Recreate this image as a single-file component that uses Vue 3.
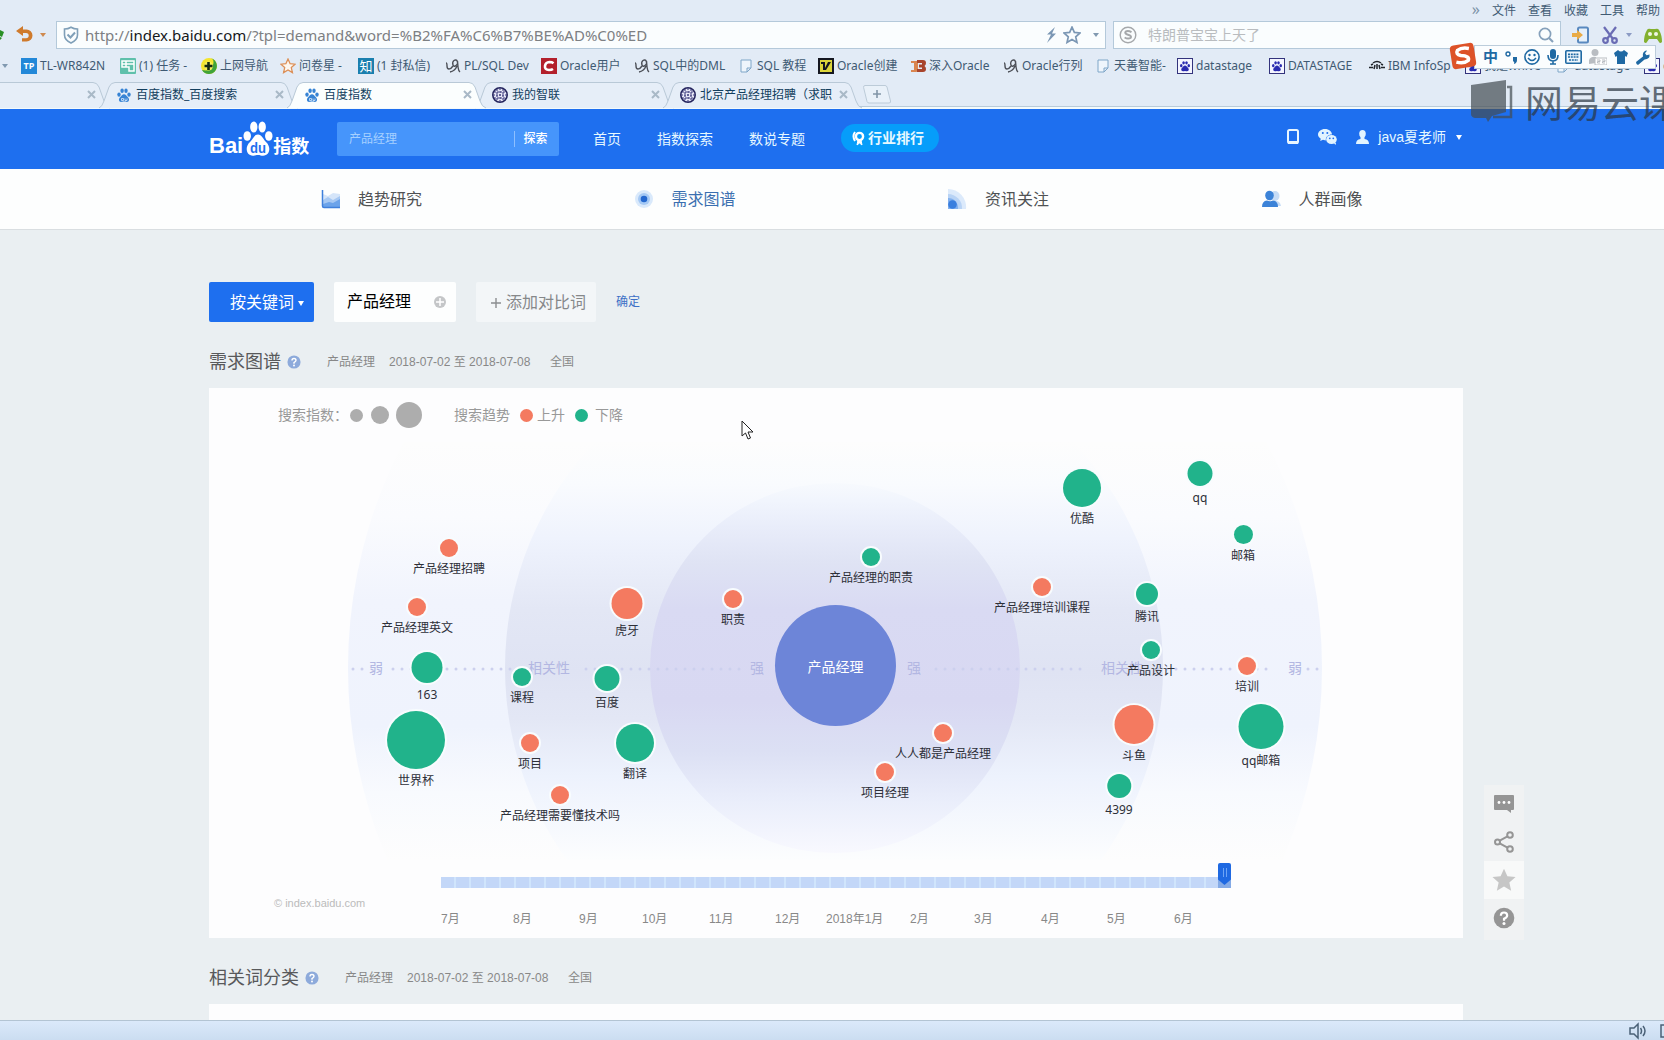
<script setup>
import { ref } from 'vue'

const menus = ['文件', '查看', '收藏', '工具', '帮助']

const bookmarks = [
  { badge: 'TP', text: 'TL-WR842N', w: 99 },
  { icon: 'task', text: '(1) 任务 -', w: 81 },
  { icon: 'nav', text: '上网导航', w: 79 },
  { icon: 'wjx', text: '问卷星 -', w: 78 },
  { badge: '知', text: '(1 封私信)', w: 87 },
  { icon: 'pl', text: 'PL/SQL Dev', w: 96 },
  { icon: 'csdn', text: 'Oracle用户', w: 93 },
  { icon: 'pl', text: 'SQL中的DML', w: 104 },
  { icon: 'page', text: 'SQL 教程', w: 80 },
  { icon: 'v', text: 'Oracle创建', w: 92 },
  { icon: 'jb', text: '深入Oracle', w: 93 },
  { icon: 'pl', text: 'Oracle行列', w: 92 },
  { icon: 'page', text: '天善智能-', w: 82 },
  { icon: 'paw', text: 'datastage', w: 92 },
  { icon: 'paw', text: 'DATASTAGE', w: 100 },
  { icon: 'ibm', text: 'IBM InfoSp', w: 96 },
  { icon: 'paw', text: '我是whive', w: 90 },
  { icon: 'page', text: 'datastage', w: 89 },
  { icon: 'paw', text: 'd', w: 30 }
]

const tabs = [
  { icon: '', text: '' },
  { icon: 'bear', text: '百度指数_百度搜索' },
  { icon: 'bear', text: '百度指数', active: true },
  { icon: 'globe', text: '我的智联' },
  { icon: 'globe', text: '北京产品经理招聘（求职' }
]

const sections = [
  { icon: 'trend', text: '趋势研究' },
  { icon: 'demand', text: '需求图谱', active: true },
  { icon: 'news', text: '资讯关注' },
  { icon: 'crowd', text: '人群画像' }
]

const nodes = [
  { t: '产品经理招聘', x: 113, y: 106, d: 18, up: true },
  { t: '产品经理英文', x: 81, y: 165, d: 18, up: true },
  { t: '163', x: 91, y: 225, d: 31 },
  { t: '世界杯', x: 80, y: 298, d: 58 },
  { t: '课程', x: 186, y: 235, d: 18 },
  { t: '项目', x: 194, y: 301, d: 18, up: true },
  { t: '产品经理需要懂技术吗', x: 224, y: 353, d: 18, up: true },
  { t: '虎牙', x: 291, y: 161, d: 31, up: true },
  { t: '百度', x: 271, y: 236, d: 25 },
  { t: '翻译', x: 299, y: 301, d: 38 },
  { t: '职责', x: 397, y: 157, d: 18, up: true },
  { t: '产品经理的职责', x: 535, y: 115, d: 18 },
  { t: '产品经理培训课程', x: 706, y: 145, d: 18, up: true },
  { t: '优酷', x: 746, y: 46, d: 38 },
  { t: 'qq', x: 864, y: 31, d: 25 },
  { t: '邮箱', x: 907, y: 92, d: 19 },
  { t: '腾讯', x: 811, y: 152, d: 22 },
  { t: '产品设计', x: 815, y: 208, d: 18 },
  { t: '培训', x: 911, y: 224, d: 18, up: true },
  { t: '斗鱼', x: 798, y: 282, d: 39, up: true },
  { t: 'qq邮箱', x: 925, y: 284, d: 45 },
  { t: '4399', x: 783, y: 344, d: 24 },
  { t: '人人都是产品经理', x: 607, y: 291, d: 18, up: true },
  { t: '项目经理', x: 549, y: 330, d: 18, up: true }
]

const months = [
  ['7月', 72], ['8月', 66], ['9月', 63], ['10月', 67], ['11月', 66], ['12月', 51],
  ['2018年1月', 84], ['2月', 64], ['3月', 67], ['4月', 66], ['5月', 67], ['6月', 57]
]
const monthColumns = months.map(m => m[1] + 'fr').join(' ')

const week = ref(51)
const query = ref('')
const webQuery = ref('')
</script>

<template>
  <div class="window">
    <svg class="defs" aria-hidden="true">
      <symbol id="paw" viewBox="0 0 16 16">
        <ellipse cx="3" cy="7.600" rx="1.700" ry="2.200" /><ellipse cx="6.100" cy="3.800" rx="1.700" ry="2.300" />
        <ellipse cx="10" cy="3.800" rx="1.700" ry="2.300" /><ellipse cx="13" cy="7.600" rx="1.700" ry="2.200" />
        <path d="M8 7.200c1.800 0 2.500 1.800 3.900 3 1.900 1.700 1.400 4.600-1 4.700-1.200 0-1.700-.4-2.900-.4s-1.700.4-2.900.4c-2.400-.1-2.900-3-1-4.700 1.400-1.200 2.100-3 3.900-3z" />
      </symbol>
      <symbol id="star" viewBox="0 0 16 16"><path d="M8 1l2.100 4.700 5 .5-3.800 3.400 1.100 5L8 12l-4.400 2.600 1.100-5L.9 6.200l5-.5z" /></symbol>
      <symbol id="bm-task" viewBox="0 0 16 16"><rect width="16" height="16" rx="1" fill="#5fc0ab" /><path d="M2 3h12v10H9V9H2zM2 6h12M6 3v6" fill="none" stroke="#fff" stroke-width="1.500" /></symbol>
      <symbol id="bm-nav" viewBox="0 0 16 16"><circle cx="8" cy="8" r="8" fill="#f5e52c" /><path d="M8 0a8 8 0 1 1-7 12q9 2 11-5T8 0" fill="#3fa33a" /><circle cx="7.500" cy="8" r="4.500" fill="#f5ee5a" /><path d="M7.500 4v8M3.500 8h8" stroke="#152a12" stroke-width="2.600" /></symbol>
      <symbol id="bm-wjx" viewBox="0 0 16 16"><path d="M8 1l2.100 4.700 5 .5-3.800 3.400 1.100 5L8 12l-4.400 2.600 1.100-5L.9 6.200l5-.5z" fill="#fdf6ee" stroke="#dc8f57" stroke-width="1.300" /></symbol>
      <symbol id="bm-pl" viewBox="0 0 16 16"><g fill="none" stroke="#4d5058" stroke-width="1.400"><path d="M1 5q1 0 1 3t2 3 4-3" /><path d="M12.500 3.500Q11 1 9 2.500t-1 4.500 4.500-1V3l.5 6q.5 4 2 5M12 8q-2 5-7 6" /></g></symbol>
      <symbol id="bm-csdn" viewBox="0 0 16 16"><rect width="16" height="16" fill="#b3202c" /><path d="M12.500 5.200Q11 4 8.500 4 4.500 4.200 4 8t4 4q2.500 0 4-1" fill="none" stroke="#fff" stroke-width="2.600" /></symbol>
      <symbol id="bm-page" viewBox="0 0 16 16"><path d="M3 2h10v8l-4 4H3zM13 10H9v4" fill="#eef5fc" stroke="#7ea6c8" /></symbol>
      <symbol id="bm-v" viewBox="0 0 16 16"><rect width="16" height="16" fill="#151720" /><rect x="2" y="2" width="12" height="12" fill="#dcd53a" /><path d="M3 4h4v6l3-6h3L8 12H5V6H3z" fill="#151720" /></symbol>
      <symbol id="bm-jb" viewBox="0 0 16 16"><path d="M1 3h7v9q0 2-3 2H1v-2h3V5H1z" fill="#d98550" /><path d="M7 2h6q3 0 3 3 0 2-1.500 3Q16 9 16 11q0 3-3 3H7v-3h5V9.500H9v-3h3V5H7z" fill="#a8442c" /></symbol>
      <symbol id="bm-paw" viewBox="0 0 16 16"><rect x=".5" y=".5" width="15" height="15" fill="#f4f5ff" stroke="#33337c" /><use href="#paw" x="2" y="2" width="12" height="12" fill="#2a2bb0" /></symbol>
      <symbol id="bm-ibm" viewBox="0 0 16 16"><g fill="none" stroke="#20242a" stroke-width="1.500"><path d="M4 5q4-3 8 0M2 7l2-1M14 7l-2-1M0 9.500h4M12 9.500h4M6 7l-1 4M10 7l1 4M8 6v5" /></g></symbol>
      <symbol id="tab-bear" viewBox="0 0 16 16"><use href="#paw" width="16" height="16" fill="#3683d4" /><path d="M5.500 11.500h2v2h-2zM9 11.500v2h2v-2" fill="none" stroke="#d9e9fa" stroke-width=".8" /></symbol>
      <symbol id="tab-globe" viewBox="0 0 16 16"><circle cx="8" cy="8" r="7.200" fill="#e7e7f6" stroke="#26265e" stroke-width="1.600" /><path d="M2 5h12M1 8h14M2 11h12M5 2v12M8 1v14M11 2v12" stroke="#3d3d7d" stroke-width="1.100" stroke-dasharray="2 1" /></symbol>
      <symbol id="sec-trend" viewBox="0 0 20 20"><path d="M2 5l5 2 5-3 7 1v14H3z" fill="#d5e5f9" /><path d="M2 11l5-3 5 3 7-4v12H2z" fill="#a6c8f3" /><path d="M2 15l6-2 4 1 7-4v9H2z" fill="#6ba3ea" /><path d="M1.500 1v16q0 1.500 1.500 1.500h16" fill="none" stroke="#3f80dc" stroke-width="1.500" /></symbol>
      <symbol id="sec-demand" viewBox="0 0 20 20"><circle cx="9" cy="10" r="9" fill="#d9e9fb" /><circle cx="9" cy="10" r="6" fill="#a5c9f4" /><circle cx="9" cy="10" r="3.300" fill="#2468cf" /></symbol>
      <symbol id="sec-news" viewBox="0 0 20 20"><path d="M0 0a18 18 0 0 1 18 20H0z" fill="#dceafb" /><path d="M0 5a14 14 0 0 1 14 15H0z" fill="#b8d3f5" /><path d="M0 9a10 10 0 0 1 10 11H0z" fill="#81b0ee" /><circle cx="4.500" cy="15.500" r="4.300" fill="#3a7fde" /></symbol>
      <symbol id="sec-crowd" viewBox="0 0 20 20"><ellipse cx="13" cy="7" rx="4.500" ry="5" fill="#c6dcf6" /><path d="M10 17q0-5 4-5t5 5z" fill="#c6dcf6" /><ellipse cx="7.500" cy="6.500" rx="4.300" ry="4.800" fill="#3c83d8" /><path d="M0 18q0-6 5-6.500 3 1.500 6 0 5 .5 5 6.500z" fill="#3c83d8" /></symbol>
      <symbol id="help" viewBox="0 0 16 16"><circle cx="8" cy="8" r="7.500" /><path d="M5.700 6.400Q5.700 4 8 4t2.300 2.100Q10.300 7.400 8 8.600V10" fill="none" stroke="#fff" stroke-width="1.600" /><circle cx="8" cy="12" r="1.100" fill="#fff" /></symbol>
    </svg>

    <div class="browser">
      <nav class="menubar" aria-label="浏览器菜单">
        <span class="more">»</span>
        <button v-for="m in menus" :key="m">{{ m }}</button>
      </nav>

      <div class="addressrow">
        <svg class="reload" width="4" height="16" viewBox="0 0 4 16"><path d="M0 3l4 2-2 5-2-1zM0 10l2 1-2 2z" fill="#299026" /></svg>
        <button class="undo" aria-label="恢复">
          <svg width="18" height="18" viewBox="0 0 18 18"><path d="M7 0v3.500h3.500a6 6 0 0 1 0 12H6V12.300h4a2.700 2.700 0 0 0 0-5.400H7V10L0 5z" fill="#cf7a2c" /></svg>
          <i class="caret orange"></i>
        </button>
        <div class="address">
          <svg width="16" height="18" viewBox="0 0 16 18" fill="none" stroke="#7f9fb8" stroke-width="1.600"><path d="M8 1.200q3 1.800 6.500 1.800v6q0 5-6.500 8Q1.500 14 1.500 9V3Q5 3 8 1.200z" /><path d="M4.500 8.500l3 3 4.500-5" stroke-width="2" /></svg>
          <div class="url" role="textbox" aria-label="地址" contenteditable="true" spellcheck="false">http://<b>index.baidu.com</b>/?tpl=demand&amp;word=%B2%FA%C6%B7%BE%AD%C0%ED</div>
          <svg width="12" height="18" viewBox="0 0 12 18"><path d="M10 1L2 8.500h4L2 17l9-9.500H7z" fill="#7b97b4" /></svg>
          <svg class="fav" width="18" height="18" viewBox="0 0 16 16"><use href="#star" /></svg>
          <i class="caret"></i>
        </div>
        <label class="websearch">
          <svg width="18" height="18" viewBox="0 0 18 18" fill="none" stroke="#a5a8ab"><circle cx="9" cy="9" r="7.800" stroke-width="1.400" /><path d="M12.500 6.200Q9 4.200 6.600 5.700q-1.300 2 2.400 3 4.200 1.200 2.600 3.200-2.600 1.500-6-.4" stroke-width="2" /></svg>
          <input v-model="webQuery" placeholder="特朗普宝宝上天了" aria-label="搜索">
          <svg width="16" height="16" viewBox="0 0 16 16" fill="none" stroke="#86a1bb" stroke-width="1.700"><circle cx="7" cy="7" r="5.600" /><path d="M11 11l4 4" stroke-width="2.200" /></svg>
        </label>
        <div class="tools">
          <svg width="18" height="18" viewBox="0 0 18 18"><rect x="6" y="1.500" width="10" height="15" rx="1.500" fill="#e6f0fa" stroke="#5989bf" stroke-width="2" /><path d="M5 4l6 5-6 5v-3H0V7h5z" fill="#e9ab46" /></svg>
          <svg width="16" height="18" viewBox="0 0 16 18" fill="none" stroke="#6a6cb4" stroke-width="2.200"><path d="M2 1l9 12M14 1L5 13" /><circle cx="3.500" cy="14.500" r="2.300" /><circle cx="12.500" cy="14.500" r="2.300" /></svg>
          <i class="caret violet"></i>
          <svg width="18" height="18" viewBox="0 0 18 18"><path d="M3 4q1-2 4-1h4q3-1 4 1 3 5 3 12-2 2-3 0l-2-3H5l-2 3q-1 2-3 0Q0 9 3 4z" fill="#83b02e" /><circle cx="6" cy="8" r="2" fill="#f1f7e3" /><circle cx="12" cy="8" r="2" fill="#f1f7e3" /></svg>
        </div>
      </div>

      <nav class="bookmarks" aria-label="书签">
        <i class="caret"></i>
        <a v-for="(b, i) in bookmarks" :key="i" href="#" :style="{ flexBasis: b.w + 'px' }">
          <b v-if="b.badge" class="badge" :class="{ wide: b.badge === '知' }">{{ b.badge }}</b>
          <svg v-else width="16" height="16"><use :href="'#bm-' + b.icon" /></svg>{{ b.text }}
        </a>
      </nav>

      <div class="tabs">
        <div v-for="(t, i) in tabs" :key="i" class="tab" :class="{ active: t.active, first: i === 0 }">
          <svg class="shape" width="204" height="27" viewBox="0 0 204 27"><path d="M1 26Q4 25 6 19L11 5Q13 .5 17 .5H183q4 0 6 4.500l5 14q2 6 6 7" /></svg>
          <svg v-if="t.icon" width="16" height="16"><use :href="'#tab-' + t.icon" /></svg>
          <span>{{ t.text }}</span>
          <button class="close" aria-label="关闭标签"><svg width="9" height="9" viewBox="0 0 9 9"><path d="M1 1l7 7M8 1L1 8" stroke="#a9b9c7" stroke-width="2" /></svg></button>
        </div>
        <button class="newtab" aria-label="新标签"><svg width="28" height="19" viewBox="0 0 28 19" fill="none"><path d="M2 .5h20q1.500 0 2 1.500l3.500 14q.5 2-1.500 2H6q-1.500 0-2-1.500L.6 2.500Q.3.500 2 .5z" fill="#e9f1f9" stroke="#bccbd8" /><path d="M14 5v8M10 9h8" stroke="#8296a8" stroke-width="1.600" /></svg></button>
      </div>
    </div>

    <header class="top">
      <a class="logo" href="#" aria-label="百度指数">
        <span class="bai">Bai</span>
        <svg width="30" height="36" viewBox="0 0 32 36" preserveAspectRatio="none"><g fill="#fff"><ellipse cx="4.500" cy="15" rx="4" ry="4.800" /><ellipse cx="11.500" cy="6" rx="3.900" ry="5.500" /><ellipse cx="20.500" cy="6" rx="3.900" ry="5.500" /><ellipse cx="27.500" cy="15" rx="4" ry="4.800" /><path d="M16 13.500c4 0 5 4 8.500 7.500 6 5 4 13.500-3 13.800-2.500 0-3-.8-5.500-.8s-3 .8-5.500.8C3.500 34.500 1.500 26 7.500 21 11 17.500 12 13.500 16 13.500z" /></g><text x="16" y="32" font-size="14" font-weight="700" text-anchor="middle" fill="#1e6fef">du</text></svg>
        <span class="zs">指数</span>
      </a>
      <form class="search" @submit.prevent>
        <input v-model="query" placeholder="产品经理" aria-label="关键词">
        <button>探索</button>
      </form>
      <nav class="links">
        <a href="#">首页</a><a href="#">指数探索</a><a href="#">数说专题</a>
      </nav>
      <a class="pill" href="#">
        <svg width="14" height="16" viewBox="0 0 14 16" fill="none" stroke="#fff"><circle cx="7.500" cy="6.500" r="3.600" stroke-width="2.400" /><path d="M6 10l-1 5 2.500-2 2.500 2-1-5" fill="#fff" /><path d="M3 2Q0 6 3 11" stroke-width="2" /></svg>
        行业排行
      </a>
      <div class="user">
        <svg width="12" height="16" viewBox="0 0 12 16"><rect x="1" y="1" width="10" height="13" rx="1.500" fill="none" stroke="#e9f6ff" stroke-width="2" /><path d="M1 12h10v3H1z" fill="#e9f6ff" /></svg>
        <svg width="19" height="16" viewBox="0 0 19 16"><path d="M7 0c4 0 7 2.600 7 5.500-4 0-6.500 2.500-6.200 6L5 10.700 2.200 12l.6-2.300C1 8.700 0 7.200 0 5.600 0 2.600 3 0 7 0z" fill="#e2f4ff" /><ellipse cx="13.500" cy="10.500" rx="5.300" ry="4.500" fill="#e2f4ff" /><path d="M15 13l3 1-.5 2z" fill="#e2f4ff" /><g fill="#1e6fef"><circle cx="4.800" cy="4" r="1" /><circle cx="9.300" cy="4" r="1" /><circle cx="11.800" cy="9.300" r=".9" /><circle cx="15.300" cy="9.300" r=".9" /></g></svg>
        <svg width="13" height="14" viewBox="0 0 13 14"><ellipse cx="6.500" cy="3.800" rx="3.300" ry="3.800" fill="#e2f4ff" /><path d="M0 14q0-4.500 4.500-5V6h4v3q4.500.5 4.500 5z" fill="#e2f4ff" /></svg>
        <a href="#">java夏老师</a>
        <i class="caret white"></i>
      </div>
    </header>

    <nav class="sections">
      <a v-for="s in sections" :key="s.text" href="#" :class="{ active: s.active }">
        <svg width="20" height="20"><use :href="'#sec-' + s.icon" /></svg><span>{{ s.text }}</span>
      </a>
    </nav>

    <main>
      <div class="query">
        <button class="mode">按关键词<i class="caret white"></i></button>
        <div class="word">产品经理<svg width="12" height="12" viewBox="0 0 12 12"><circle cx="6" cy="6" r="6" fill="#c4c6c8" /><path d="M6 2v8M2 6h8" stroke="#fff" stroke-width="1.500" /></svg></div>
        <button class="add"><svg width="10" height="10" viewBox="0 0 10 10"><path d="M5 0v10M0 5h10" stroke="#8b8d90" stroke-width="1.400" /></svg>添加对比词</button>
        <a href="#">确定</a>
      </div>

      <div class="heading">
        <h2>需求图谱</h2>
        <svg width="14" height="14" fill="#8daadb"><use href="#help" /></svg>
        <span class="sub">产品经理</span><span class="range">2018-07-02 至 2018-07-08</span><span>全国</span>
      </div>

      <section class="card">
        <div class="legend">
          <span class="index">搜索指数：</span>
          <i class="dot s"></i><i class="dot m"></i><i class="dot l"></i>
          <span class="trend">搜索趋势</span>
          <i class="dot s up"></i><span>上升</span>
          <i class="dot s down"></i><span>下降</span>
        </div>

        <div class="stage">
          <svg class="rings" width="1000" height="418" viewBox="0 0 1000 418">
            <defs>
              <linearGradient id="g1" gradientUnits="userSpaceOnUse" x1="0" y1="0" x2="0" y2="418">
                <stop offset="0" stop-color="#fdfdfd" /><stop offset=".18" stop-color="#fafbfe" /><stop offset=".38" stop-color="#f1f4fd" /><stop offset=".68" stop-color="#eff3fd" /><stop offset=".84" stop-color="#f8fafe" /><stop offset="1" stop-color="#fdfdfd" />
              </linearGradient>
              <linearGradient id="g2" gradientUnits="userSpaceOnUse" x1="0" y1="0" x2="0" y2="418">
                <stop offset="0" stop-color="#fdfdfd" /><stop offset=".1" stop-color="#f9fbfe" /><stop offset=".23" stop-color="#eff3fd" /><stop offset=".4" stop-color="#e3e7f5" /><stop offset=".55" stop-color="#dfe3f3" /><stop offset=".66" stop-color="#e3e7f5" /><stop offset=".8" stop-color="#edf2fd" /><stop offset="1" stop-color="#fcfdfe" />
              </linearGradient>
              <linearGradient id="g3" gradientUnits="userSpaceOnUse" x1="0" y1="0" x2="0" y2="418">
                <stop offset=".08" stop-color="#fafcfe" /><stop offset=".14" stop-color="#f1f5fd" /><stop offset=".2" stop-color="#e9edfa" /><stop offset=".29" stop-color="#dfe3f4" /><stop offset=".4" stop-color="#d9daf3" /><stop offset=".62" stop-color="#d8d8f2" /><stop offset=".74" stop-color="#dce0f4" /><stop offset=".86" stop-color="#eaeefb" /><stop offset="1" stop-color="#fafaff" />
              </linearGradient>
            </defs>
            <circle cx="499" cy="226" r="487" fill="url(#g1)" />
            <circle cx="498" cy="226" r="329" fill="url(#g2)" />
            <circle cx="499" cy="226" r="185" fill="url(#g3)" />
            <g stroke="#ccd0ee" stroke-width="3" stroke-linecap="round" stroke-dasharray="0 9">
              <path d="M17 227h12M57 227h124M250 227h156M600 227h152M822 227h116M972 227h14" />
            </g>
            <g class="axis">
              <text x="40" y="231">弱</text><text x="213" y="231">相关性</text><text x="421" y="231">强</text>
              <text x="578" y="231">强</text><text x="786" y="231">相关性</text><text x="959" y="231">弱</text>
            </g>
          </svg>
          <div class="core">产品经理</div>
          <div v-for="n in nodes" :key="n.t" class="node" :style="{ left: n.x + 'px', top: n.y - n.d / 2 + 'px' }">
            <i :class="n.up ? 'up' : 'down'" :style="{ width: n.d + 'px', height: n.d + 'px' }"></i>
            <span>{{ n.t }}</span>
          </div>
        </div>

        <div class="timeline">
          <small>© index.baidu.com</small>
          <div class="scale">
            <input v-model="week" type="range" min="0" max="51" aria-label="周">
            <div class="months" :style="{ gridTemplateColumns: monthColumns }">
              <span v-for="m in months" :key="m[0]">{{ m[0] }}</span>
            </div>
          </div>
        </div>
      </section>

      <div class="heading">
        <h2>相关词分类</h2>
        <svg width="14" height="14" fill="#8daadb"><use href="#help" /></svg>
        <span class="sub">产品经理</span><span class="range">2018-07-02 至 2018-07-08</span><span>全国</span>
      </div>
      <section class="card next"></section>
    </main>

    <footer class="status">
      <svg width="18" height="18" viewBox="0 0 18 18" fill="none" stroke="#4b6177" stroke-width="1.500"><path d="M1 6h4l4-4v14l-4-4H1z" /><path d="M11.500 6q2 3 0 6M14 4q4 5 0 10" /></svg>
      <svg width="4" height="16" viewBox="0 0 4 16"><path d="M4 2H1v12h3" fill="none" stroke="#4b6177" stroke-width="1.500" /></svg>
    </footer>

    <aside class="side">
      <button aria-label="反馈"><svg width="20" height="18" viewBox="0 0 20 18"><path d="M1 0h18q1 0 1 1v13q0 1-1 1h-2v3l-4-3H1q-1 0-1-1V1q0-1 1-1z" fill="#959595" /><g fill="#fff"><circle cx="5" cy="7.500" r="1.400" /><circle cx="10" cy="7.500" r="1.400" /><circle cx="15" cy="7.500" r="1.400" /></g></svg></button>
      <button aria-label="分享"><svg width="20" height="22" viewBox="0 0 20 22" fill="none" stroke="#959595" stroke-width="2"><circle cx="3.500" cy="11" r="2.500" /><circle cx="16" cy="4" r="2.800" /><circle cx="16" cy="18" r="2.800" /><path d="M5.700 9.700l7.800-4.300M5.700 12.300l7.800 4.300" /></svg></button>
      <button class="lit" aria-label="收藏"><svg width="26" height="26" fill="#c6c6c6"><use href="#star" /></svg></button>
      <button aria-label="帮助"><svg width="22" height="22" fill="#959595"><use href="#help" /></svg></button>
    </aside>

    <div class="ime">
      <svg class="sogou" width="28" height="28" viewBox="0 0 28 28"><g transform="rotate(-9 14 14)"><rect x="2" y="2" width="24" height="24" rx="4" fill="#dd5228" /><path d="M21 7.500Q14 5 9.500 7.500 6.500 11 12 13.200q9 1.800 6.500 6Q14 22 6.500 19" fill="none" stroke="#fff" stroke-width="3.500" /></g></svg>
      <b>中</b>
      <svg width="12" height="14" viewBox="0 0 12 14"><circle cx="3" cy="4" r="2" fill="none" stroke="#1f69a3" stroke-width="1.400" /><path d="M8 7h4v3q0 3-3 4 1-2-1-3z" fill="#1f69a3" /></svg>
      <svg width="16" height="16" viewBox="0 0 16 16"><circle cx="8" cy="8" r="7.100" fill="none" stroke="#1f69a3" stroke-width="1.600" /><circle cx="5.500" cy="6" r="1.200" fill="#1f69a3" /><circle cx="10.500" cy="6" r="1.200" fill="#1f69a3" /><path d="M4 9q4 5 8 0" fill="none" stroke="#1f69a3" stroke-width="1.500" /></svg>
      <svg width="12" height="16" viewBox="0 0 12 16"><rect x="3" y="0" width="6" height="10" rx="3" fill="#1f69a3" /><path d="M1 6q0 6 5 6t5-6M6 12v3M3 15h6" fill="none" stroke="#1f69a3" stroke-width="1.600" /></svg>
      <svg width="17" height="14" viewBox="0 0 17 14"><rect x=".8" y=".8" width="15.400" height="12.400" rx="1" fill="#eef6fc" stroke="#1f69a3" stroke-width="1.600" /><path d="M3 4.300h11M3 7h11M4 10h9" stroke="#1f69a3" stroke-width="1.700" stroke-dasharray="2 .8" /></svg>
      <svg width="18" height="16" viewBox="0 0 18 16" fill="#b9bdc2"><circle cx="6" cy="3.500" r="3.500" /><path d="M0 15V11q2-4 7-3v6z" /><rect x="6" y="9" width="12" height="7" fill="#fff" stroke="#b9bdc2" /><path d="M8 11h3v1.500H8.500V14H11M13 11h3v1.500h-2.500V14H16" fill="none" stroke="#b9bdc2" /></svg>
      <svg width="14" height="14" viewBox="0 0 14 14"><path d="M4 0q3 3 6 0l4 3-1.500 4L11 6v8H3V6l-1.500 1L0 3z" fill="#1f69a3" /></svg>
      <svg width="15" height="15" viewBox="0 0 15 15"><path d="M1 12L8 6.500Q7 2 11 .5l1 .3-2 2.500 1.500 2L14.600 4.500q.4 4.500-5 5L3 15q-2-.5-2-3z" fill="#1f69a3" /></svg>
    </div>

    <div class="watermark" aria-hidden="true">
      <svg width="44" height="44" viewBox="0 0 44 44"><path d="M0 6L35 1v32L21 37l-4 6-2-4H4q-4-1-4-4z" fill="#444c52" /><path d="M36 8h4v30H22" fill="none" stroke="#444c52" stroke-width="2.500" /></svg>
      <span>网易云课</span>
    </div>

    <svg class="pointer" width="13" height="20" viewBox="0 0 13 20"><path d="M1 1v15l3.500-3 2.500 6 2.500-1L7 12h5z" fill="#fff" stroke="#222" /></svg>
  </div>
</template>

<style>
html,
body {
  height: 100%;
  margin: 0;
  overflow: hidden;
}
#app {
  height: 100%;
}
</style>

<style scoped>
.window {
  position: relative;
  display: flex;
  flex-direction: column;
  height: 100vh;
  overflow: hidden;
  background: #eaeff2;
  color: #777;
  font: 12px/16px "Liberation Sans", "Noto Sans CJK SC", sans-serif;
}
* {
  box-sizing: border-box;
}
svg {
  flex: none;
}
.defs {
  position: absolute;
  width: 0;
  height: 0;
}
a {
  color: inherit;
  text-decoration: none;
}
button {
  padding: 0;
  border: 0;
  background: none;
  color: inherit;
  font: inherit;
}
input {
  min-width: 0;
  padding: 0;
  border: 0;
  outline: 0;
  background: none;
  font: inherit;
}
.caret {
  flex: none;
  border: 3px solid transparent;
  border-top: 4px solid #8199b0;
  border-bottom: 0;
}
.caret.orange {
  border-top-color: #cf8a50;
}
.caret.violet {
  border-top-color: #8c9bc4;
}
.caret.white {
  border-top: 5px solid #fff;
}

/* browser chrome */
.browser {
  flex: none;
  background: #e2ebf6;
  color: #3f5a73;
  font-family: "Noto Sans", "Noto Sans CJK SC", sans-serif;
}
.menubar {
  display: flex;
  justify-content: flex-end;
  gap: 12px;
  height: 21px;
  padding-right: 4px;
  line-height: 20px;
}
.more {
  color: #7d93a8;
  font-size: 16px;
  line-height: 18px;
}
.addressrow {
  display: flex;
  align-items: center;
  height: 28px;
}
.undo {
  display: flex;
  align-items: center;
  gap: 6px;
  width: 52px;
  padding-left: 12px;
}
.address {
  display: flex;
  flex: 1055;
  align-items: center;
  height: 28px;
  padding: 0 6px;
  border: 1px solid #b4c9da;
  background: #fafdfe;
}
.url {
  flex: 1;
  margin-left: 6px;
  outline: 0;
  color: #7d8083;
  font-size: 15px;
  line-height: 22px;
  white-space: nowrap;
}
.url b {
  color: #15181b;
  font-weight: 400;
}
.fav {
  margin: 0 12px 0 6px;
  fill: none;
  stroke: #7b97b4;
  stroke-width: 1.5px;
}
.websearch {
  display: flex;
  flex: 443;
  align-items: center;
  height: 28px;
  margin-left: 7px;
  padding: 0 6px 0 5px;
  border: 1px solid #b4c9da;
  background: #fafdfe;
}
.websearch input {
  flex: 1;
  margin-left: 11px;
  font-size: 14px;
}
.websearch input::placeholder {
  color: #b9bcbf;
}
.tools {
  display: flex;
  align-items: center;
  gap: 8px;
  width: 103px;
  padding-left: 11px;
}
.tools svg:nth-of-type(2) {
  margin-left: 4px;
}
.tools svg:last-child {
  margin-left: 4px;
}
.bookmarks {
  display: flex;
  align-items: center;
  height: 33px;
  padding-left: 2px;
  overflow: hidden;
}
.bookmarks .caret {
  margin-right: 13px;
}
.bookmarks a {
  display: flex;
  flex: none;
  align-items: center;
  gap: 3px;
  white-space: nowrap;
}
.badge {
  width: 16px;
  height: 16px;
  background: #2388d8;
  color: #fff;
  font-size: 9px;
  line-height: 16px;
  text-align: center;
}
.badge.wide {
  background: #1a7fae;
  font-size: 13px;
  font-weight: 400;
}
.tabs {
  display: flex;
  align-items: center;
  height: 27px;
  border-bottom: 2px solid #f3fafc;
  box-shadow: inset 0 -1px #b9cbda;
}
.tab {
  position: relative;
  display: flex;
  align-items: center;
  gap: 4px;
  width: 188px;
  height: 25px;
  padding: 0 8px 0 12px;
  color: #123e5e;
}
.tab.first {
  width: 104px;
}
.tab > :not(.shape) {
  position: relative;
}
.tab span {
  flex: 1;
  overflow: hidden;
  white-space: nowrap;
}
.tab .close {
  display: flex;
}
.shape {
  position: absolute;
  right: -10px;
  top: 0;
  fill: #e6eef8;
  stroke: #b9c9d7;
}
.active .shape {
  fill: #fbfefe;
}
.tab.active {
  z-index: 1;
}
.newtab {
  display: flex;
  margin-left: 7px;
}

/* site header */
.top {
  display: flex;
  flex: none;
  align-items: center;
  height: 60px;
  padding: 0 201px 0 209px;
  background: #1e6fef;
  color: #e6f8ff;
  font-size: 14px;
}
.logo {
  display: flex;
  align-items: flex-end;
  width: 128px;
  height: 36px;
  color: #fff;
  font-weight: 700;
}
.bai {
  font-size: 22px;
  line-height: 22px;
}
.zs {
  font-size: 18px;
  line-height: 20px;
}
.search {
  display: flex;
  align-items: center;
  width: 222px;
  height: 34px;
  border-radius: 2px;
  background: #4695fb;
  font-size: 12px;
}
.search input {
  flex: 1;
  padding-left: 12px;
  color: #fff;
}
.search input::placeholder {
  color: #a5d0ff;
}
.search button {
  width: 45px;
  height: 16px;
  padding-right: 3px;
  border-left: 1px solid #8dbfff;
  font-weight: 500;
  color: #fff;
  line-height: 16px;
}
.links {
  display: flex;
  gap: 36px;
  margin-left: 34px;
}
.pill {
  display: flex;
  align-items: center;
  justify-content: center;
  gap: 2px;
  width: 98px;
  height: 28px;
  margin: 0 0 2px 36px;
  padding-right: 4px;
  border-radius: 14px;
  background: #069dfa;
  font-weight: 700;
}
.user {
  display: flex;
  align-items: center;
  margin-left: auto;
  padding: 0 1px 4px 0;
}
.user svg + svg {
  margin-left: 19px;
}
.user a {
  margin: 0 10px 0 9px;
}

.sections {
  display: flex;
  flex: none;
  height: 61px;
  padding: 0 201px 0 209px;
  border-bottom: 1px solid #d9dee1;
  background: #fdfefe;
  color: #505254;
  font-size: 16px;
}
.sections a {
  display: flex;
  flex: 1;
  align-items: center;
  gap: 17px;
  padding-left: 112px;
}
.sections span {
  padding-top: 2px;
}
.sections .active {
  color: #3a6fb0;
}

/* page body */
main {
  display: flex;
  flex: 1;
  flex-direction: column;
  min-height: 0;
  padding: 52px 201px 0 209px;
  overflow: hidden;
}
.query {
  display: flex;
  flex: none;
  align-items: center;
  gap: 20px;
  height: 40px;
}
.query > :not(a) {
  display: flex;
  align-items: center;
  height: 40px;
  border-radius: 2px;
  font-size: 16px;
}
.query .mode {
  gap: 4px;
  width: 105px;
  padding: 2px 0 0 21px;
  background: #1e6fef;
  color: #fff;
}
.word {
  justify-content: space-between;
  width: 122px;
  padding: 0 10px 0 13px;
  background: #fdfefe;
  color: #000;
}
.query .add {
  gap: 5px;
  width: 120px;
  padding: 2px 0 0 15px;
  background: #f3f6f8;
  color: #86888a;
}
.query a {
  color: #3d6fc6;
}
.heading {
  display: flex;
  flex: none;
  align-items: center;
  gap: 14px;
  height: 66px;
  padding-top: 14px;
  color: #888;
}
.heading h2 {
  margin: 0 -8px 0 0;
  color: #58595b;
  font-size: 18px;
  font-weight: 400;
}
.heading .sub {
  margin-left: 12px;
}
.heading .range {
  min-width: 147px;
}
.card {
  flex: none;
  background: #fdfdfe;
}
.card.next {
  height: 400px;
}
.legend {
  display: flex;
  align-items: center;
  height: 54px;
  padding-left: 69px;
  color: #999;
  font-size: 14px;
}
.legend .index {
  margin-right: 2px;
}
.legend .trend {
  margin: 0 10px 0 32px;
}
.legend .down {
  margin: 0 7px 0 10px;
}
.legend .up {
  margin-right: 4px;
}
.dot {
  flex: none;
  border-radius: 50%;
  background: #adadad;
}
.dot.s {
  width: 13px;
  height: 13px;
}
.dot.m {
  width: 18px;
  height: 18px;
  margin: 0 7px 0 8px;
}
.dot.l {
  width: 26px;
  height: 26px;
}
.legend .up,
.node .up {
  background: #f47a60;
}
.legend .down,
.node .down {
  background: #21b38b;
}

.stage {
  position: relative;
  width: 1000px;
  height: 418px;
  margin: 0 auto;
  color: #2d2f38;
  font-family: "Noto Sans", "Noto Sans CJK SC", sans-serif;
}
.rings {
  display: block;
}
.axis {
  fill: #b3b7e2;
  font-size: 14px;
  text-anchor: middle;
}
.core {
  position: absolute;
  left: 439px;
  top: 163px;
  width: 121px;
  height: 121px;
  border-radius: 50%;
  background: #6d85d8;
  color: #fff;
  font-size: 14px;
  line-height: 123px;
  text-align: center;
}
.node {
  position: absolute;
  display: flex;
  flex-direction: column;
  align-items: center;
  gap: 4px;
  white-space: nowrap;
  transform: translateX(-50%);
}
.node i {
  border-radius: 50%;
  box-shadow: 0 0 0 2px #f8fcfe;
}

.timeline {
  display: flex;
  height: 78px;
  padding-left: 65px;
}
.timeline small {
  width: 167px;
  padding-top: 35px;
  color: #bbb;
  font-size: 11px;
}
.scale {
  width: 790px;
  color: #888;
}
.scale input {
  display: block;
  width: 100%;
  height: 25px;
  margin: 3px 0 23px;
  appearance: none;
  background:
    linear-gradient(#84aae6, #84aae6) right bottom / 13px 11px no-repeat,
    repeating-linear-gradient(90deg, #c3d7f8 0 13px, #d0e5fc 13px 15px) left bottom / 100% 11px no-repeat;
}
.scale input::-webkit-slider-runnable-track {
  height: 25px;
}
.scale input::-webkit-slider-thumb {
  width: 13px;
  height: 22px;
  appearance: none;
  border-radius: 2px;
  background:
    linear-gradient(90deg, #6ea4f5 1px, transparent 1px 3px, #6ea4f5 3px) 5px 5px / 4px 9px no-repeat,
    #1f69e2;
  clip-path: polygon(0 0, 100% 0, 100% 75%, 50% 100%, 0 75%);
}
.months {
  display: grid;
}
.months span {
  white-space: nowrap;
}

.status {
  display: flex;
  flex: none;
  align-items: center;
  justify-content: flex-end;
  gap: 13px;
  height: 20px;
  border-top: 1px solid #b3c4d3;
  background: linear-gradient(#dbe9fa, #cbddf1);
}

/* floating layers */
.side {
  position: absolute;
  right: 140px;
  bottom: 100px;
  z-index: 2;
  width: 40px;
  padding-bottom: 3px;
  background: #f0f2f3;
}
.side button {
  display: flex;
  align-items: center;
  justify-content: center;
  width: 40px;
  height: 38px;
}
.side .lit {
  background: #f8f9f9;
}
.ime {
  position: absolute;
  top: 45px;
  right: 8px;
  z-index: 4;
  display: flex;
  align-items: center;
  justify-content: space-between;
  width: 182px;
  height: 24px;
  padding: 0 5px 0 8px;
  border: 1px solid #bccddb;
  background: #fbfdfe;
  color: #1f69a3;
  font-size: 15px;
}
.sogou {
  position: absolute;
  left: -26px;
  top: -4px;
}
.watermark {
  position: absolute;
  top: 77px;
  right: 0;
  z-index: 3;
  display: flex;
  align-items: center;
  gap: 10px;
  width: 193px;
  overflow: hidden;
  color: #2a3642;
  font: 400 38px/48px "Noto Sans CJK SC", sans-serif;
  white-space: nowrap;
  opacity: .7;
}
.pointer {
  position: absolute;
  left: 741px;
  top: 420px;
}
</style>
